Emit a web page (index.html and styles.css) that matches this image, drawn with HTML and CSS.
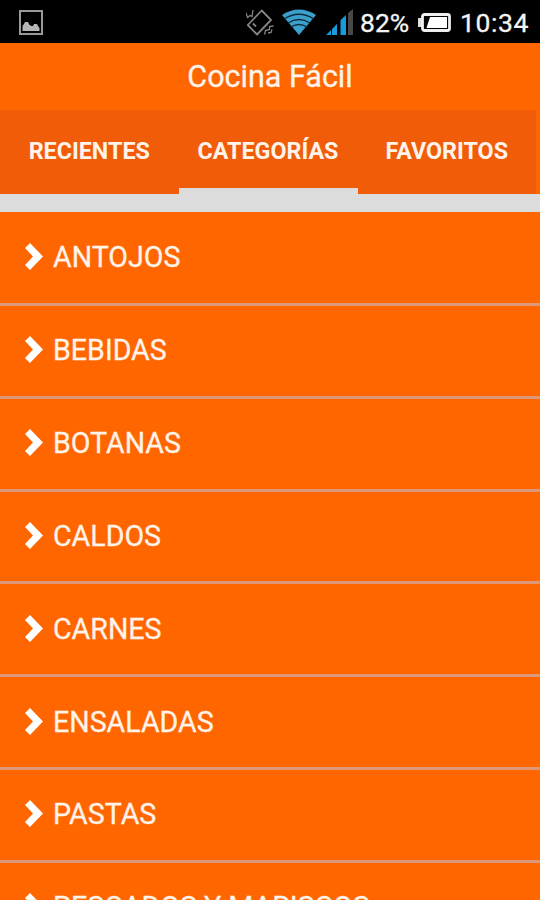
FILE: index.html
```
<!DOCTYPE html>
<html lang="es">
<head>
  <meta charset="UTF-8" />
  <meta name="viewport" content="width=device-width, initial-scale=1.0"/>
  <title>Cocina Fácil</title>
  <link rel="stylesheet" href="styles.css">
</head>
<body>
  <!-- Status bar -->
  <div class="status-bar">
    <svg class="icon-picture" width="24" height="25" viewBox="0 0 24 25">
      <rect x="1" y="1" width="22" height="23" fill="none" stroke="#999" stroke-width="2"/>
      <path d="M3.500 21v-5l1.500-2 1-2h3l1.500 3 2 1h1.500l1-2h3l1 2 1.500 2v3z" fill="#b5b5b5"/>
    </svg>
    <div class="status-right">
      <svg class="icon-vibrate" width="28" height="28" viewBox="0 0 28 28" fill="none" stroke="#858585" stroke-width="1.8">
        <path d="M15.700 1.500L25 11 11 25.500 1.800 16z" stroke-linejoin="round"/>
        <path d="M7 14.500l3 3"/>
        <path d="M0 4l1.500 4.500L4 6.500l2 1L7 1" stroke-width="1.300"/>
        <path d="M27.500 17l-4 .5v3l-4 1-1 4M26 20.500l-1 3-3 .5" stroke-width="1.300"/>
      </svg>
      <svg class="icon-wifi" width="34" height="26" viewBox="0 0 34 26">
        <path d="M0 6Q17-5 34 6L17 26z" fill="#3ba0cb"/>
        <path d="M2 10Q17 .5 32 10M6 14Q17 7 28 14M9 18Q17 13 25 18" fill="none" stroke="#0b2c3a" stroke-width="1.3"/>
      </svg>
      <svg class="icon-signal" width="27" height="27" viewBox="0 0 27 27" fill="#189bdc">
        <path d="M0 26l5-5v5zM6 20l5-5v11H6zM13 13l5-5v18h-5z" />
        <path d="M15 11l5-5v20h-5z" fill="#189bdc"/>
        <path d="M13 12h1.500v14H13z" fill="#000"/>
        <path d="M22 4l5-4v26h-5z" fill="#484848"/>
      </svg>
      <span class="battery-level">82%</span>
      <svg class="icon-battery" width="33" height="19" viewBox="0 0 33 19">
        <rect x="0" y="5" width="4" height="9" fill="#ddd"/>
        <rect x="4.500" y="1.500" width="27" height="16" rx="2" fill="none" stroke="#eee" stroke-width="2.800"/>
        <path d="M12 4h17v11H8.500z" fill="#fff"/>
      </svg>
      <span class="clock">10:34</span>
    </div>
  </div>

  <header class="title-bar">
    <h1>Cocina Fácil</h1>
  </header>

  <!-- Tabs -->
  <nav class="tabs">
    <div class="tab">RECIENTES</div>
    <div class="tab active">CATEGORÍAS</div>
    <div class="tab">FAVORITOS</div>
  </nav>
  <div class="divider"></div>

  <!-- Categories -->
  <ul class="categories">
    <li><svg class="arrow" viewBox="0 0 18 27"><path d="M5 0L18 13.500 5 27 0 22 8 13.500 0 5z"/></svg><span>ANTOJOS</span></li>
    <li><svg class="arrow" viewBox="0 0 18 27"><path d="M5 0L18 13.500 5 27 0 22 8 13.500 0 5z"/></svg><span>BEBIDAS</span></li>
    <li><svg class="arrow" viewBox="0 0 18 27"><path d="M5 0L18 13.500 5 27 0 22 8 13.500 0 5z"/></svg><span>BOTANAS</span></li>
    <li><svg class="arrow" viewBox="0 0 18 27"><path d="M5 0L18 13.500 5 27 0 22 8 13.500 0 5z"/></svg><span>CALDOS</span></li>
    <li><svg class="arrow" viewBox="0 0 18 27"><path d="M5 0L18 13.500 5 27 0 22 8 13.500 0 5z"/></svg><span>CARNES</span></li>
    <li><svg class="arrow" viewBox="0 0 18 27"><path d="M5 0L18 13.500 5 27 0 22 8 13.500 0 5z"/></svg><span>ENSALADAS</span></li>
    <li><svg class="arrow" viewBox="0 0 18 27"><path d="M5 0L18 13.500 5 27 0 22 8 13.500 0 5z"/></svg><span>PASTAS</span></li>
    <li><svg class="arrow" viewBox="0 0 18 27"><path d="M5 0L18 13.500 5 27 0 22 8 13.500 0 5z"/></svg><span>PESCADOS Y MARISCOS</span></li>
  </ul>
</body>
</html>
```
FILE: styles.css
```
* {
  box-sizing: border-box;
}

body {
  margin: 0;
  height: 900px;
  overflow: hidden;
  font-family: Roboto, "Liberation Sans", sans-serif;
  background-color: #ff6600;
  color: #fff3ea;
}

/* Status bar */
.status-bar {
  display: flex;
  justify-content: space-between;
  height: 42.5px;
  padding: 9px 10px 0 19px;
  background-color: #000;
  color: #f4f4f4;
}

.icon-picture {
  margin-top: 1px;
}

.status-right {
  display: flex;
  align-items: flex-start;
  height: 28px;
  font-size: 26.5px;
  line-height: 28px;
  -webkit-text-stroke: 0.3px #f4f4f4;
}

.icon-wifi {
  margin-left: 8px;
}

.icon-signal {
  margin-left: 10px;
}

.battery-level {
  width: 51px;
  margin-left: 7px;
}

.icon-battery {
  margin: 4px 0 0 7px;
}

.clock {
  width: 70px;
  margin-left: 9px;
  letter-spacing: 0.6px;
}

.title-bar {
  height: 67.5px;
}

h1 {
  margin: 0;
  text-align: center;
  font-size: 30.5px;
  font-weight: 400;
  line-height: 68px;
  -webkit-text-stroke: 0.3px #fff3ea;
}

/* Tabs */
.tabs {
  display: flex;
  width: 536px;
  height: 84px;
  background-color: #f15c08;
}

.tab {
  flex: 1;
  text-align: center;
  font-size: 23.3px;
  font-weight: 700;
  line-height: 82px;
}

.tab.active {
  flex: 0 0 179px;
  border-bottom: 6px solid #dcdcdc;
}

.divider {
  height: 18px;
  background-color: #dcdcdc;
}

/* Categories */
.categories {
  margin: 0;
  padding: 1px 0 0;
  list-style: none;
}

.categories li {
  display: flex;
  align-items: center;
  height: 92.85px;
  padding: 0 0 2px 25px;
  border-bottom: 3px solid #dc9878;
  font-size: 30px;
}

.categories span {
  margin-left: 10px;
  white-space: nowrap;
  transform: scaleX(0.953);
  transform-origin: left;
  -webkit-text-stroke: 0.3px #fff3ea;
}

.arrow {
  width: 18px;
  height: 27px;
  fill: #fff;
}
```
